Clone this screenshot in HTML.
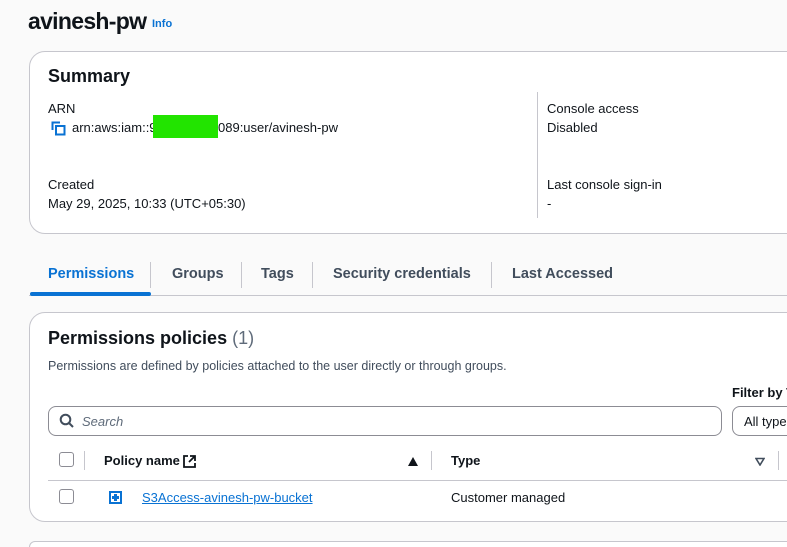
<!DOCTYPE html>
<html><head><style>
*{margin:0;padding:0;box-sizing:border-box}
html,body{width:787px;height:547px;overflow:hidden}
body{background:#fafafa;font-family:"Liberation Sans",sans-serif;color:#0f141a;position:relative;font-size:13px}
.a{position:absolute;white-space:nowrap}
.card{position:absolute;background:#fff;border:1px solid #c6c6cd;border-radius:16px}
.b{font-weight:bold}
</style></head><body>
<div class="a b" style="left:28px;top:8px;font-size:23px;letter-spacing:-0.7px">avinesh-pw</div>
<div class="a b" style="left:152px;top:18px;font-size:11px;color:#0972d3">Info</div>

<div class="card" style="left:29px;top:51px;width:780px;height:183px"></div>
<div class="a b" style="left:48px;top:66px;font-size:18px">Summary</div>
<div class="a" style="left:48px;top:101px">ARN</div>
<svg class="a" style="left:51px;top:121px" width="15" height="15" viewBox="0 0 15 15"><path d="M1.5 9V1.5H9" fill="none" stroke="#0972d3" stroke-width="2"/><rect x="5" y="5" width="8.5" height="8.5" fill="none" stroke="#0972d3" stroke-width="2"/></svg>
<div class="a" style="left:72px;top:120px">arn:aws:iam::9</div>
<div class="a" style="left:153px;top:115px;width:65px;height:23px;background:#22e400"></div>
<div class="a" style="left:218px;top:120px">089:user/avinesh-pw</div>
<div class="a" style="left:48px;top:177px">Created</div>
<div class="a" style="left:48px;top:196px">May 29, 2025, 10:33 (UTC+05:30)</div>
<div class="a" style="left:537px;top:92px;width:1px;height:126px;background:#c6c6cd"></div>
<div class="a" style="left:547px;top:101px">Console access</div>
<div class="a" style="left:547px;top:120px">Disabled</div>
<div class="a" style="left:547px;top:177px">Last console sign-in</div>
<div class="a" style="left:547px;top:196px">-</div>

<div class="a b" style="left:48px;top:266px;font-size:14.5px;color:#0972d3">Permissions</div>
<div class="a" style="left:150px;top:262px;width:1px;height:26px;background:#c6c6cd"></div>
<div class="a b" style="left:172px;top:266px;font-size:14.5px;color:#414d5c">Groups</div>
<div class="a" style="left:241px;top:262px;width:1px;height:26px;background:#c6c6cd"></div>
<div class="a b" style="left:261px;top:266px;font-size:14.5px;color:#414d5c">Tags</div>
<div class="a" style="left:312px;top:262px;width:1px;height:26px;background:#c6c6cd"></div>
<div class="a b" style="left:333px;top:266px;font-size:14.5px;color:#414d5c">Security credentials</div>
<div class="a" style="left:491px;top:262px;width:1px;height:26px;background:#c6c6cd"></div>
<div class="a b" style="left:512px;top:266px;font-size:14.5px;color:#414d5c">Last Accessed</div>
<div class="a" style="left:29px;top:295px;width:760px;height:1px;background:#c6c6cd"></div>
<div class="a" style="left:30px;top:292px;width:121px;height:4px;background:#0972d3;border-radius:2px"></div>

<div class="card" style="left:29px;top:312px;width:780px;height:210px"></div>
<div class="a b" style="left:48px;top:328px;font-size:18px">Permissions policies <span style="font-weight:normal;color:#5f6b7a">(1)</span></div>
<div class="a" style="left:48px;top:359px;font-size:12.5px;color:#414d5c">Permissions are defined by policies attached to the user directly or through groups.</div>
<div class="a b" style="left:732px;top:385px">Filter by T</div>
<div class="a" style="left:48px;top:406px;width:674px;height:30px;border:1px solid #8c8c94;border-radius:8px"></div>
<svg class="a" style="left:59px;top:413px" width="16" height="16" viewBox="0 0 16 16"><circle cx="6.5" cy="6.5" r="4.8" fill="none" stroke="#414d5c" stroke-width="2"/><path d="M10 10l4 4" stroke="#414d5c" stroke-width="2"/></svg>
<div class="a" style="left:82px;top:414px;font-style:italic;color:#5f6b7a">Search</div>
<div class="a" style="left:732px;top:406px;width:80px;height:30px;border:1px solid #8c8c94;border-radius:8px"></div>
<div class="a" style="left:744px;top:414px">All type</div>
<div class="a" style="left:59px;top:452px;width:15px;height:15px;border:1.5px solid #8c8c94;border-radius:3px"></div>
<div class="a" style="left:84px;top:451px;width:1px;height:19px;background:#c6c6cd"></div>
<div class="a b" style="left:104px;top:453px">Policy name</div>
<svg class="a" style="left:183px;top:455px" width="13" height="13" viewBox="0 0 13 13"><path d="M5 1H1v11h11V8" fill="none" stroke="#0f141a" stroke-width="1.8"/><path d="M6 7l5.5-5.5M7 1h5v5" fill="none" stroke="#0f141a" stroke-width="1.8"/></svg>
<svg class="a" style="left:408px;top:457px" width="10" height="9" viewBox="0 0 10 9"><path d="M5 0L10 9H0z" fill="#0f141a"/></svg>
<div class="a" style="left:431px;top:451px;width:1px;height:19px;background:#c6c6cd"></div>
<div class="a b" style="left:451px;top:453px">Type</div>
<svg class="a" style="left:755px;top:457px" width="10" height="9" viewBox="0 0 10 9"><path d="M1 1.5H9L5 8z" fill="none" stroke="#414d5c" stroke-width="1.6"/></svg>
<div class="a" style="left:778px;top:451px;width:1px;height:19px;background:#c6c6cd"></div>
<div class="a" style="left:48px;top:480px;width:760px;height:1px;background:#c6c6cd"></div>
<div class="a" style="left:59px;top:489px;width:15px;height:15px;border:1.5px solid #8c8c94;border-radius:3px"></div>
<div class="a" style="left:109px;top:491px;width:13px;height:13px;border:2px solid #0972d3"></div>
<div class="a" style="left:114px;top:496px;width:3px;height:3px;background:#0972d3;box-shadow:0 -2px 0 #0972d3,0 2px 0 #0972d3,-2px 0 0 #0972d3,2px 0 0 #0972d3"></div>
<div class="a" style="left:142px;top:490px;color:#0972d3;text-decoration:underline">S3Access-avinesh-pw-bucket</div>
<div class="a" style="left:451px;top:490px">Customer managed</div>

<div class="card" style="left:29px;top:541px;width:780px;height:6px;border-bottom:none;border-radius:16px 16px 0 0"></div>
</body></html>
